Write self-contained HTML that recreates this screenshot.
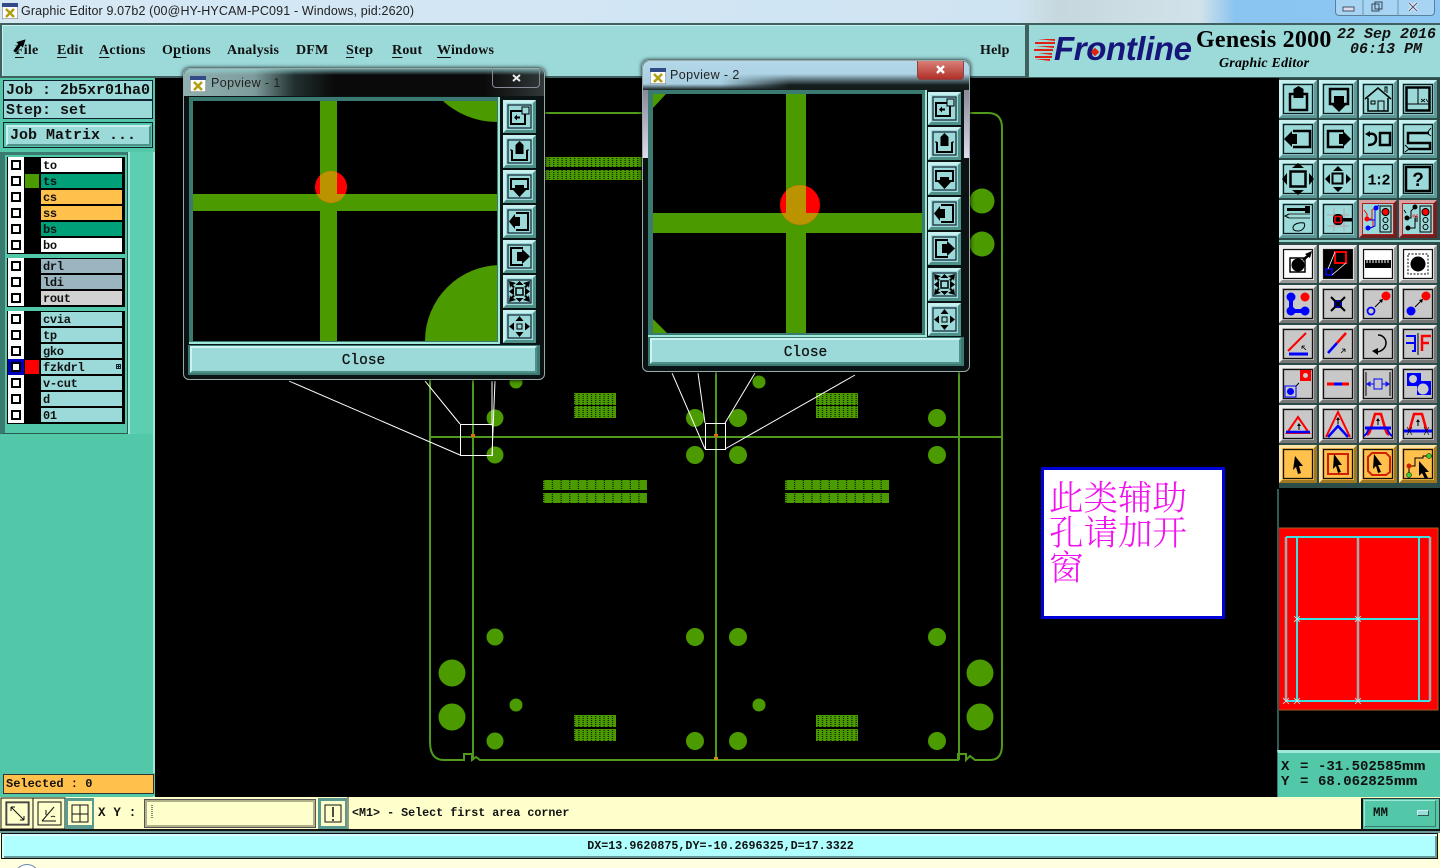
<!DOCTYPE html>
<html><head><meta charset="utf-8"><title>Graphic Editor</title>
<style>
html,body{margin:0;padding:0;width:1440px;height:868px;overflow:hidden;background:#000}
div,span,svg{position:absolute;box-sizing:border-box}
#root{left:0;top:0;width:1440px;height:868px;overflow:hidden}
.m{font-family:"Liberation Mono",monospace;font-weight:bold;color:#111;white-space:pre}
.menu{font:bold 14px/18px "Liberation Serif",serif;color:#111;top:40px;white-space:pre;letter-spacing:.2px}
.menu u{text-underline-offset:3px;text-decoration-thickness:1px}
.info{left:3px;width:150px;height:20px;background:#9cd9d9;border:1px solid #123;font-size:15px;line-height:20px;padding-left:2px}
.grp{left:7px;width:118px;background:#000}
.ck{left:8px;width:16px;height:16px;background:#fff}
.ck:after{content:"";position:absolute;box-sizing:border-box;left:3px;top:3px;width:10px;height:10px;background:#fff;border:2px solid #000}
.ln{left:41px;width:81px;height:14px;font-size:12px;line-height:16px;padding-left:2px;letter-spacing:-.3px}
.a{background:#9cd9d9}
.pop{border:1px solid #9aa;border-radius:6px;background:#1b2a2a;box-shadow:0 0 4px #000}
.close{background:#9cd9d9;border:2px solid;border-color:#cdf2f2 #4f9088 #4f9088 #cdf2f2;font-size:14.500px;font-weight:normal;text-align:center;color:#111;-webkit-text-stroke:.3px #111}
</style></head><body><div id="root">
<svg width="0" height="0" style="left:0;top:0"><defs>
<g id="ft"><rect width="38" height="38" fill="#9cd9d9"/><path d="M0 0H38L35 3H3V35L0 38Z" fill="#c8f0f0"/><path d="M38 38H0L3 35H35V3L38 0Z" fill="#5f9a9a"/><rect x="4.500" y="4.500" width="29" height="29" fill="none" stroke="#0c1c1c" stroke-width="1.300"/></g>
<g id="fr"><rect width="38" height="38" fill="#b02020"/><path d="M0 0H38L35 3H3V35L0 38Z" fill="#d8a0a0"/><path d="M38 38H0L3 35H35V3L38 0Z" fill="#702020"/><rect x="4" y="4" width="30" height="30" fill="#9cd9d9"/></g>
<g id="fg"><rect width="38" height="38" fill="#c8c8c8"/><path d="M0 0H38L35 3H3V35L0 38Z" fill="#eee"/><path d="M38 38H0L3 35H35V3L38 0Z" fill="#777"/><rect x="4.500" y="4.500" width="29" height="29" fill="none" stroke="#111" stroke-width="1.300"/></g>
<g id="fw"><rect width="38" height="38" fill="#fff"/><path d="M0 0H38L35 3H3V35L0 38Z" fill="#eee"/><path d="M38 38H0L3 35H35V3L38 0Z" fill="#999"/><rect x="4.500" y="4.500" width="29" height="29" fill="none" stroke="#111" stroke-width="1.300"/></g>
<g id="fo"><rect width="38" height="38" fill="#ffc04c"/><path d="M0 0H38L35 3H3V35L0 38Z" fill="#ffe4a8"/><path d="M38 38H0L3 35H35V3L38 0Z" fill="#a07820"/><rect x="4.500" y="4.500" width="29" height="29" fill="none" stroke="#111" stroke-width="1.300"/></g>
<g id="pb"><rect width="33" height="33" fill="#9cd9d9"/><path d="M0 0H33L30 3H3V30L0 33Z" fill="#c8f0f0"/><path d="M33 33H0L3 30H30V3L33 0Z" fill="#4f9088"/><rect x="5" y="5" width="23" height="23" fill="none" stroke="#123" stroke-width="1.200"/></g>
<pattern id="pd" width="4.200" height="2" patternUnits="userSpaceOnUse"><rect width="4.200" height="2" fill="#4a9a00"/><rect x="3" width="1" height="1" fill="#000"/></pattern>
<pattern id="pw" width="8.650" height="2" patternUnits="userSpaceOnUse"><rect width="8.650" height="2" fill="#4a9a00"/><rect x="7" width="1" height="1" fill="#000"/></pattern>
<g id="i1"><rect x="8" y="11" width="14" height="13" fill="none" stroke="#000" stroke-width="2"/><rect x="19" y="7" width="7" height="7" fill="#9cd9d9" stroke="#000"/><path d="M11 17.500l3-3v2h3v2h-3v2z" fill="#000"/></g>
<g id="i2"><path d="M9 15v10h15V15" fill="none" stroke="#000" stroke-width="2"/><path d="M7 15h2M24 15h2" stroke="#000"/><path d="M16.500 6l4 4v9h-8v-9z" fill="#000"/></g>
<g id="i3"><path d="M8 9h17v10H8z" fill="none" stroke="#000" stroke-width="2"/><path d="M12 15h9v5h2l-6.500 7L10 20h2z" fill="#000"/></g>
<g id="i4"><path d="M13 8h12v17H13" fill="none" stroke="#000" stroke-width="2"/><path d="M17 12v9h-5v3l-6-7.500L12 9v3z" fill="#000"/></g>
<g id="i5"><path d="M20 8H8v17h12" fill="none" stroke="#000" stroke-width="2"/><path d="M14 12v9h5v3l8-7.500L19 9v3z" fill="#000"/></g>
<g id="i6"><rect x="13" y="13" width="7" height="7" fill="none" stroke="#000" stroke-width="1.500"/><path d="M6 6l7 2-3 2 2 2-2 1-2-2-1 2zM27 6l-7 2 3 2-2 2 2 1 2-2 1 2zM6 27l7-2-3-2 2-2-2-1-2 2-1-2zM27 27l-7-2 3-2-2-2 2-1 2 2 1-2z" fill="#000"/><path d="M6 16.500l5-4v8zM27 16.500l-5-4v8zM16.500 6l4 4h-8zM16.500 27l4-4h-8z" fill="#000"/></g>
<g id="i7"><rect x="14" y="14" width="5" height="5" fill="none" stroke="#000"/><path d="M16.500 6l4 5h-8zM16.500 27l4-5h-8zM6 16.500l5-4v8zM27 16.500l-5-4v8z" fill="#000"/></g>
</defs></svg>

<!-- title bar -->
<div style="left:0;top:0;width:1440px;height:23px;background:linear-gradient(to right,#d6e8f4 0,#d2e6f4 500px,#cfe4f2 1015px,#c6d8dc 1060px,#d2e2ea 1200px,#8ac4f0 1235px,#8cc6f2 1440px)"></div>
<svg style="left:2px;top:3px" width="16" height="16"><rect width="16" height="16" fill="#fff" stroke="#666"/><rect width="16" height="4" fill="#334a88"/><path d="M4 6l8 8M12 6l-8 8" stroke="#b0a010" stroke-width="2.500"/></svg>
<div style="left:21px;top:3px;font:12.500px/16px 'Liberation Sans',sans-serif;color:#222;white-space:pre;letter-spacing:.14px">Graphic Editor 9.07b2 (00@HY-HYCAM-PC091 - Windows, pid:2620)</div>
<div style="left:1335px;top:-1px;width:100px;height:17px;background:#a8d4f4;border:1px solid #5a7f98;border-radius:0 0 4px 4px"></div>
<svg style="left:1335px;top:0" width="100" height="16"><path d="M28 0v16M63 0v16" stroke="#6a93ad"/><rect x="8" y="7" width="11" height="4" fill="#dde" stroke="#456"/><rect x="37" y="4" width="7" height="7" fill="none" stroke="#345"/><rect x="40" y="2" width="7" height="7" fill="none" stroke="#345"/><path d="M74 3l8 8M82 3l-8 8" stroke="#eef" stroke-width="3"/><path d="M74 3l8 8M82 3l-8 8" stroke="#456" stroke-width="1"/></svg>

<!-- menu -->
<div style="left:0;top:23px;width:1440px;height:55px;background:#405f5f"></div>
<div style="left:2px;top:25px;width:1023px;height:51px;background:#9cd9d9;border-top:1px solid #c8f0f0;border-left:1px solid #c8f0f0"></div>
<div style="left:1029px;top:25px;width:411px;height:52px;background:#9cd9d9"></div>
<div class="menu" style="left:15px;top:42px"><u>F</u>ile</div>
<div class="menu" style="left:57px;top:42px"><u>E</u>dit</div>
<div class="menu" style="left:99px;top:42px"><u>A</u>ctions</div>
<div class="menu" style="left:162px;top:42px">O<u>p</u>tions</div>
<div class="menu" style="left:227px;top:42px">Analysis</div>
<div class="menu" style="left:296px;top:42px">DFM</div>
<div class="menu" style="left:346px;top:42px"><u>S</u>tep</div>
<div class="menu" style="left:392px;top:42px"><u>R</u>out</div>
<div class="menu" style="left:437px;top:42px"><u>W</u>indows</div>
<div class="menu" style="left:980px;top:42px">Help</div>
<svg style="left:10px;top:36px" width="20" height="20"><path d="M16 3L6 6l2 2-5 7 3 2 5-7 2 2z" fill="#000" stroke="#9cd9d9" stroke-width=".5"/></svg>

<!-- logo -->
<svg style="left:1034px;top:36px" width="24" height="28"><path d="M4 3H21V5zM2 10H20V12zM4 17H18V19zM1 23H16V25zM1 6H21V8L1 8zM0 13H19V15H0zM1 20H18V22H1z" fill="#e02010"/></svg>
<div style="left:1054px;top:29px;font:italic bold 33px/40px 'Liberation Sans',sans-serif;color:#16167a;white-space:pre;letter-spacing:-.4px">Frontline</div>
<div style="left:1092px;top:49px;width:6px;height:6px;background:#e02010;transform:rotate(45deg)"></div>
<div style="left:1196px;top:25px;font:bold 24px/30px 'Liberation Serif',serif;color:#000;white-space:pre;letter-spacing:.25px">Genesis 2000</div>
<div style="left:1219px;top:56px;font:italic bold 14px/16px 'Liberation Serif',serif;color:#000;white-space:pre;letter-spacing:.2px">Graphic Editor</div>
<div class="m" style="left:1337px;top:27px;font-size:15px;line-height:16px;font-style:italic">22 Sep 2016</div>
<div class="m" style="left:1350px;top:42px;font-size:15px;line-height:16px;font-style:italic">06:13 PM</div>

<!-- left panel -->
<div style="left:0;top:78px;width:155px;height:719px;background:#52c8a8"></div>
<div class="info m" style="top:80px">Job : 2b5xr01ha0</div>
<div class="info m" style="top:100px;height:19px;line-height:19px">Step: set</div>
<div style="left:3px;top:122px;width:150px;height:26px;background:#52c8a8;border:1px solid #123"></div>
<div class="m" style="left:6px;top:125px;width:145px;height:21px;background:#9cd9d9;border:2px solid;border-color:#c8f0f0 #4f9088 #4f9088 #c8f0f0;font-size:15px;line-height:17px;padding-left:2px">Job Matrix ...</div>
<div style="left:0;top:152px;width:128px;height:282px;background:#52c8a8;border:1px solid #2a5a50;border-left:5px solid #3a7a70;border-top:3px solid #3a7a70"></div>
<div style="left:128px;top:152px;width:25px;height:282px;background:#5ccfb1;border-left:2px solid #a0e8d8"></div>
<div style="left:153px;top:152px;width:2px;height:645px;background:#a0e8d8"></div>
<div class="grp" style="top:157px;height:97px"></div>
<div class="grp" style="top:258px;height:49px"></div>
<div class="grp" style="top:311px;height:113px"></div>
<div class="ck" style="top:157px"></div><div class="ln m" style="top:158px;background:#fff">to</div>
<div class="ck" style="top:173px"></div><div style="left:25px;top:174px;width:14px;height:14px;background:#4a9a00"></div><div class="ln m" style="top:174px;background:#00a078">ts</div>
<div class="ck" style="top:189px"></div><div class="ln m" style="top:190px;background:#ffc04c">cs</div>
<div class="ck" style="top:205px"></div><div class="ln m" style="top:206px;background:#ffc04c">ss</div>
<div class="ck" style="top:221px"></div><div class="ln m" style="top:222px;background:#00a078">bs</div>
<div class="ck" style="top:237px"></div><div class="ln m" style="top:238px;background:#fff">bo</div>
<div class="ck" style="top:258px"></div><div class="ln m" style="top:259px;background:#9ab4c0">drl</div>
<div class="ck" style="top:274px"></div><div class="ln m" style="top:275px;background:#9ab4c0">ldi</div>
<div class="ck" style="top:290px"></div><div class="ln m" style="top:291px;background:#d2d2d2">rout</div>
<div class="ck" style="top:311px"></div><div class="ln m a" style="top:312px">cvia</div>
<div class="ck" style="top:327px"></div><div class="ln m a" style="top:328px">tp</div>
<div class="ck" style="top:343px"></div><div class="ln m a" style="top:344px">gko</div>
<div style="left:8px;top:359px;width:16px;height:16px;background:#0000c0"></div><div style="left:11px;top:362px;width:10px;height:10px;background:#fff;border:2px solid #000"></div><div style="left:25px;top:360px;width:14px;height:14px;background:#f00"></div><div class="ln m a" style="top:360px">fzkdrl</div>
<svg style="left:116px;top:364px" width="6" height="6"><path d="M.5.500h4v4h-4zM2.500.5v4M.5 2.500h4" fill="none" stroke="#123"/></svg>
<div class="ck" style="top:375px"></div><div class="ln m a" style="top:376px">v-cut</div>
<div class="ck" style="top:391px"></div><div class="ln m a" style="top:392px">d</div>
<div class="ck" style="top:407px"></div><div class="ln m a" style="top:408px">01</div>
<div style="left:0;top:773px;width:155px;height:23px;background:#52c8a8"></div>
<div class="m" style="left:3px;top:774px;width:151px;height:20px;background:#ffc04c;border:1px solid #333;font-size:12px;line-height:18px;padding-left:2px">Selected : 0</div>

<!-- canvas -->
<svg style="left:155px;top:78px" width="1122" height="719" viewBox="155 78 1122 719">
<rect x="155" y="78" width="1122" height="719" fill="#000"/>
<g fill="none" stroke="#4f9a1c" stroke-width="2">
<path d="M540 113H988Q1002 113 1002 128V745Q1002 760 990 760H975L970 756L966 760V754H958V760H912H720H480L476 757L472 760V754H464V760H444Q430 760 430 742V370"/>
<path d="M473 370V760M716 370V760M959 370V760M430 437H1002"/>
</g>
<g fill="#4a9a00">
<circle cx="495" cy="418" r="8.500"/><circle cx="495" cy="455" r="8.500"/><circle cx="695" cy="418" r="9"/><circle cx="695" cy="455" r="9"/><circle cx="738" cy="418" r="9"/><circle cx="738" cy="455" r="9"/><circle cx="937" cy="418" r="9"/><circle cx="937" cy="455" r="9"/>
<circle cx="495" cy="637" r="8.500"/><circle cx="695" cy="637" r="9"/><circle cx="738" cy="637" r="9"/><circle cx="937" cy="637" r="9"/>
<circle cx="495" cy="741" r="8.500"/><circle cx="695" cy="741" r="9"/><circle cx="738" cy="741" r="9"/><circle cx="937" cy="741" r="9"/>
<circle cx="516" cy="382" r="6.500"/><circle cx="759" cy="382" r="6.500"/><circle cx="516" cy="705" r="6.500"/><circle cx="759" cy="705" r="6.500"/>
<circle cx="452" cy="673" r="13.500"/><circle cx="452" cy="717" r="13.500"/><circle cx="980" cy="673" r="13.500"/><circle cx="980" cy="717" r="13.500"/><circle cx="982" cy="201" r="12.500"/><circle cx="982" cy="244" r="12.500"/>
</g>
<g fill="url(#pd)">
<rect x="574" y="393" width="42" height="12"/><rect x="574" y="406" width="42" height="12"/><rect x="816" y="393" width="42" height="12"/><rect x="816" y="406" width="42" height="12"/>
<rect x="574" y="715" width="42" height="12"/><rect x="574" y="729" width="42" height="12"/><rect x="816" y="715" width="42" height="12"/><rect x="816" y="729" width="42" height="12"/>
<rect x="545" y="157" width="97" height="10"/><rect x="545" y="170" width="97" height="10"/>
</g>
<g fill="url(#pw)">
<rect x="543" y="480" width="104" height="10"/><rect x="543" y="493" width="104" height="10"/><rect x="785" y="480" width="104" height="10"/><rect x="785" y="493" width="104" height="10"/>
</g>
<g fill="none" stroke="#fff" stroke-width="1">
<rect x="460.500" y="424.500" width="32" height="31"/><rect x="705.500" y="423.500" width="20" height="26"/>
<path d="M289 381L460 455M425 381L460 424M492 381V424M495 381L492 455M672 373L705 449M698 373L705 423M755 373L725 423M855 375L725 449"/>
</g>
<rect x="471" y="434" width="4" height="3" fill="#e06a10"/><rect x="714" y="434" width="4" height="3" fill="#e06a10"/><rect x="714" y="757" width="4" height="3" fill="#d08a10"/>
</svg>

<!-- note -->
<div style="left:1041px;top:467px;width:184px;height:152px;background:#fff;border:3px solid #0000d8"></div>
<div style="left:1049px;top:478px;width:140px;font:34.500px/35px 'Noto Serif CJK SC','Liberation Serif',serif;color:#f010f0;font-weight:300">此类辅助<br>孔请加开<br>窗</div>

<!-- popup 1 -->
<div class="pop" style="left:183px;top:68px;width:362px;height:312px;background:#0c1212"></div>
<div style="left:184px;top:69px;width:360px;height:27px;border-radius:6px 6px 0 0;background:linear-gradient(to right,#8fb0b0 0,#7f9c9c 70px,#223030 110px,#0a0a0a 150px,#0a0a0a 300px,#303838 360px)"></div>
<div style="left:184px;top:69px;width:360px;height:6px;border-radius:6px 6px 0 0;background:linear-gradient(to bottom,rgba(150,215,215,.7),rgba(150,215,215,0))"></div>
<svg style="left:190px;top:76px" width="16" height="16"><rect width="16" height="16" fill="#fff" stroke="#666"/><rect width="16" height="4" fill="#334a88"/><path d="M4 6l8 8M12 6l-8 8" stroke="#b0a010" stroke-width="2.500"/></svg>
<div style="left:211px;top:75px;font:12.500px/16px 'Liberation Sans',sans-serif;color:#222;white-space:pre;letter-spacing:.4px">Popview - 1</div>
<div style="left:492px;top:68px;width:48px;height:20px;border:1px solid #889;border-top:0;border-radius:0 0 4px 4px"></div>
<svg style="left:510px;top:73px" width="14" height="10"><path d="M3 2l7 6M10 2l-7 6" stroke="#eee" stroke-width="2"/></svg>
<div style="left:188px;top:96px;width:352px;height:280px;background:#0a1414"></div>
<div style="left:189px;top:97px;width:311px;height:247px;background:#3a7a70;border-right:2px solid #a0e8d8;border-bottom:2px solid #a0e8d8"></div>
<svg style="left:193px;top:101px" width="304" height="240" viewBox="193 101 304 240">
<rect x="193" y="101" width="304" height="240" fill="#000"/>
<circle cx="497" cy="42" r="80" fill="#4a9a00"/><circle cx="501" cy="341" r="76" fill="#4a9a00"/>
<path d="M320 101h17v240h-17zM193 194h304v17H193z" fill="#4a9a00"/>
<circle cx="331" cy="187" r="16" fill="#f00"/>
<clipPath id="c1"><circle cx="331" cy="187" r="16"/></clipPath>
<path clip-path="url(#c1)" d="M320 101h17v240h-17zM193 194h304v17H193z" fill="#bb9200"/>
</svg>
<svg style="left:503px;top:100px" width="34" height="243">
<g><use href="#pb" y="0"/><use href="#i1" y="0"/><use href="#pb" y="35"/><use href="#i2" y="35"/><use href="#pb" y="70"/><use href="#i3" y="70"/><use href="#pb" y="105"/><use href="#i4" y="105"/><use href="#pb" y="140"/><use href="#i5" y="140"/><use href="#pb" y="175"/><use href="#i6" y="175"/><use href="#pb" y="210"/><use href="#i7" y="210"/></g>
</svg>
<div style="left:188px;top:345px;width:352px;height:30px;background:#3a7a70"></div>
<div class="m close" style="left:190px;top:346px;width:347px;height:27px;line-height:26px">Close</div>

<!-- popup 2 -->
<div class="pop" style="left:642px;top:60px;width:328px;height:312px;background:#0c1212"></div>
<div style="left:643px;top:61px;width:326px;height:29px;border-radius:6px 6px 0 0;background:linear-gradient(to bottom,#b4d8e8 0,#a4cde0 100%)"></div>
<div style="left:643px;top:84px;width:326px;height:6px;background:linear-gradient(to bottom,rgba(16,24,24,0),#141c1c)"></div>
<div style="left:720px;top:74px;width:249px;height:16px;background:linear-gradient(to bottom,rgba(16,24,24,0),#141c1c 70%);-webkit-mask-image:linear-gradient(to right,transparent,#000 70px);mask-image:linear-gradient(to right,transparent,#000 70px)"></div>
<svg style="left:650px;top:68px" width="16" height="16"><rect width="16" height="16" fill="#fff" stroke="#666"/><rect width="16" height="4" fill="#334a88"/><path d="M4 6l8 8M12 6l-8 8" stroke="#b0a010" stroke-width="2.500"/></svg>
<div style="left:670px;top:67px;font:12.500px/16px 'Liberation Sans',sans-serif;color:#222;white-space:pre;letter-spacing:.4px">Popview - 2</div>
<div style="left:917px;top:61px;width:47px;height:19px;border:1px solid #844;border-top:0;border-radius:0 0 4px 4px;background:linear-gradient(to bottom,#d88078,#b03028)"></div>
<svg style="left:934px;top:64px" width="14" height="12"><path d="M3 2l7 7M10 2l-7 7" stroke="#fff" stroke-width="2.400"/></svg>
<div style="left:643px;top:90px;width:5px;height:68px;background:linear-gradient(to bottom,#889,#dde)"></div>
<div style="left:964px;top:90px;width:5px;height:68px;background:linear-gradient(to bottom,#889,#dde)"></div>
<div style="left:648px;top:90px;width:316px;height:281px;background:#0a1414"></div>
<div style="left:648px;top:90px;width:279px;height:247px;background:#3a7a70;border-right:2px solid #a0e8d8;border-bottom:2px solid #a0e8d8"></div>
<svg style="left:653px;top:94px" width="269" height="239" viewBox="653 94 269 239">
<rect x="653" y="94" width="269" height="239" fill="#000"/>
<path d="M653 94h13l-13 14zM653 319l14 14h-14z" fill="#4a9a00"/>
<path d="M786 94h20v239h-20zM653 213h269v20H653z" fill="#4a9a00"/>
<circle cx="800" cy="205" r="20" fill="#f00"/>
<clipPath id="c2"><circle cx="800" cy="205" r="20"/></clipPath>
<path clip-path="url(#c2)" d="M786 94h20v239h-20zM653 213h269v20H653z" fill="#bb9200"/>
</svg>
<svg style="left:928px;top:92px" width="34" height="245">
<use href="#pb" y="0"/><use href="#i1" y="0"/><use href="#pb" y="35"/><use href="#i2" y="35"/><use href="#pb" y="70"/><use href="#i3" y="70"/><use href="#pb" y="105"/><use href="#i4" y="105"/><use href="#pb" y="140"/><use href="#i5" y="140"/><use href="#pb" y="176"/><use href="#i6" y="176"/><use href="#pb" y="211"/><use href="#i7" y="211"/>
</svg>
<div style="left:648px;top:337px;width:316px;height:29px;background:#3a7a70"></div>
<div class="m close" style="left:650px;top:338px;width:311px;height:26px;line-height:26px">Close</div>

<!-- right toolbar -->
<div style="left:1277px;top:78px;width:163px;height:410px;background:#2c4c4a"></div>
<div style="left:1277px;top:78px;width:2px;height:410px;background:#000"></div>
<div style="left:1279px;top:240px;width:161px;height:2px;background:#8fd0c8"></div>
<svg style="left:1279px;top:80px" width="161" height="405" viewBox="0 0 161 405" font-family="Liberation Sans,sans-serif">
<!-- row 1 -->
<use href="#ft"/><path d="M11 14h17v16H11z" fill="none" stroke="#000" stroke-width="2.500"/><path d="M19.500 6l5 3v9h-10V9z" fill="#000"/>
<g transform="translate(40 0)"><use href="#ft"/><path d="M11 9h18v15H11z" fill="none" stroke="#000" stroke-width="2.500"/><path d="M15 16h10v8h3l-8 8-8-8h3z" fill="#000"/></g>
<g transform="translate(80 0)"><use href="#ft"/><path d="M6 19L19 8l13 11" fill="none" stroke="#000" stroke-width="1.500"/><path d="M9 18v13h20V18" fill="none" stroke="#000" stroke-width="1.500"/><rect x="12" y="21" width="4" height="3" fill="none" stroke="#000"/><path d="M19 31v-10h6v10" fill="none" stroke="#000"/><path d="M26 12V7h2v6" fill="none" stroke="#000"/></g>
<g transform="translate(120 0)"><use href="#ft"/><rect x="7.500" y="7.500" width="23" height="23" fill="none" stroke="#000" stroke-width="2.500"/><path d="M19 8v16M8 24h22" stroke="#000"/><path d="M22 19l4 3M26 19l-4 3M27 19l2 3" stroke="#000" stroke-width=".8"/></g>
<!-- row 2 -->
<g transform="translate(0 40)"><use href="#ft"/><path d="M14 11h17v16H14" fill="none" stroke="#000" stroke-width="2.500"/><path d="M18 14v10h-5v3l-8-8 8-8v3z" fill="#000"/></g>
<g transform="translate(40 40)"><use href="#ft"/><path d="M25 11H9v16h16" fill="none" stroke="#000" stroke-width="2.500"/><path d="M20 14v10h4v3l8-8-8-8v3z" fill="#000"/></g>
<g transform="translate(80 40)"><use href="#ft"/><rect x="21" y="13" width="10" height="12" fill="none" stroke="#000" stroke-width="2.500"/><path d="M10 14c5-1 7 1 7 5s-3 6-8 6" fill="none" stroke="#000" stroke-width="2.500"/><path d="M6 14l5-3v6z" fill="#000"/></g>
<g transform="translate(120 40)"><use href="#ft"/><path d="M30 13H9v10h22v6H10" fill="none" stroke="#000" stroke-width="2.500"/><path d="M32 8l-4 5 4 3M6 25l4 4-4 3" fill="none" stroke="#000"/></g>
<!-- row 3 -->
<g transform="translate(0 80)"><use href="#ft"/><rect x="11.500" y="11.500" width="15" height="15" fill="none" stroke="#000" stroke-width="2.500"/><path d="M19 3l6 5H13zM19 35l6-5H13zM3 19l5-6v12zM35 19l-5-6v12z" fill="#000"/></g>
<g transform="translate(40 80)"><use href="#ft"/><rect x="13.500" y="13.500" width="10" height="10" fill="none" stroke="#000" stroke-width="2"/><path d="M19 6l5 5H14zM19 32l5-5H14zM6 19l5-5v10zM32 19l-5-5v10z" fill="#000"/></g>
<g transform="translate(80 80)"><use href="#ft"/><text x="19" y="24.500" text-anchor="middle" font-size="15" font-weight="bold" fill="#000" font-family="Liberation Mono,monospace" letter-spacing="-2">1:2</text></g>
<g transform="translate(120 80)"><use href="#ft"/><rect x="7" y="7" width="24" height="24" fill="none" stroke="#000" stroke-width="2.500"/><text x="19" y="26" text-anchor="middle" font-size="19" font-weight="bold" fill="#000">?</text></g>
<!-- row 4 -->
<g transform="translate(0 120)"><use href="#ft"/><path d="M8 8h20v3H8z" fill="#000"/><path d="M26 6h5v7h-5z" fill="#000"/><path d="M10 18h21M10 14h21" stroke="#000" stroke-width=".8"/><path d="M10 14l-4 2 4 2" fill="none" stroke="#000"/><path d="M14 28c0-4 6-6 11-5 2 3-1 8-6 8-3 0-5-1-5-3z" fill="none" stroke="#000"/></g>
<g transform="translate(40 120)"><use href="#ft"/><path d="M8 15h22M8 26h22M15 8v23M25 8v23" stroke="#b8a8a8"/><rect x="14" y="14" width="10" height="11" rx="4" fill="#000"/><rect x="16" y="16.500" width="6" height="6" fill="none" stroke="#f00" stroke-width="1.500"/><rect x="23" y="18" width="10" height="3.500" fill="#000"/></g>
<g transform="translate(80 120)"><use href="#fr"/><path d="M5 10l3 4v4M8 19H13v-9l6-4M11 20h3v7l-5 2" fill="none" stroke="#f00"/><path d="M8 20h8M16 20v6l-5 2M16 20V9l4-4" fill="none" stroke="#00f"/><circle cx="8" cy="19" r="2.500" fill="#f00"/><circle cx="17" cy="8" r="2.500" fill="#00f"/><circle cx="9" cy="28" r="2.500" fill="#00f"/><rect x="21" y="6" width="11" height="26" fill="#9cd9d9" stroke="#000"/><circle cx="26.500" cy="12" r="3.500" fill="#f00" stroke="#000"/><circle cx="26.500" cy="20" r="2.500" fill="none" stroke="#000"/><circle cx="26.500" cy="27" r="2.500" fill="none" stroke="#000"/></g>
<g transform="translate(120 120)"><use href="#fr"/><path d="M7 18h5v-7l4-4M8 28h8V18M5 10l2 3M16 17h3M16 19h3M16 21h3" fill="none" stroke="#000"/><circle cx="8" cy="18" r="2.500" fill="#000"/><circle cx="16" cy="7" r="2.500" fill="#000"/><circle cx="9" cy="28" r="2.500" fill="#000"/><path d="M13 16h5M15 14v4M18 14v4" stroke="#e05050"/><rect x="21" y="6" width="11" height="26" fill="#9cd9d9" stroke="#000"/><circle cx="26.500" cy="12" r="3.500" fill="#f00" stroke="#000"/><circle cx="26.500" cy="20" r="2.500" fill="none" stroke="#000"/><circle cx="26.500" cy="27" r="2.500" fill="none" stroke="#000"/></g>
<!-- group 2 row 1 -->
<g transform="translate(0 165)"><use href="#fw"/><rect x="11" y="13" width="15" height="14" fill="none" stroke="#000" stroke-width="1.500"/><circle cx="19" cy="20" r="6.500" fill="#000"/><path d="M24 15l7-6" stroke="#000" stroke-width="2.500"/><path d="M33 6l-2 7-5-4z" fill="#000"/></g>
<g transform="translate(40 165)"><use href="#fw"/><rect x="5" y="5" width="28" height="28" fill="#000"/><rect x="16" y="7" width="11" height="11" fill="none" stroke="#f00" stroke-width="2"/><rect x="7" y="24" width="6" height="6" fill="none" stroke="#00f" stroke-width="1.500"/><path d="M16 7L9 24M27 18L13 30" stroke="#fff" stroke-width=".8"/></g>
<g transform="translate(80 165)"><use href="#fw"/><rect x="6" y="15" width="26" height="8" fill="#000"/><path d="M8 14v4M11 14v4M14 14v4M17 14v4M20 14v4M23 14v4M26 14v4M29 14v4" stroke="#fff"/></g>
<g transform="translate(120 165)"><use href="#fw"/><rect x="9" y="9" width="20" height="20" fill="none" stroke="#000" stroke-dasharray="2 1.500"/><circle cx="19" cy="19" r="7.500" fill="#000"/></g>
<!-- row 2 -->
<g transform="translate(0 205)"><use href="#fg"/><path d="M12 13v13h13" fill="none" stroke="#00f" stroke-width="4"/><circle cx="12" cy="12" r="4.500" fill="#00f"/><circle cx="12" cy="26" r="4.500" fill="#00f"/><circle cx="26" cy="26" r="4.500" fill="#00f"/><circle cx="26" cy="12" r="4.500" fill="#f00"/></g>
<g transform="translate(40 205)"><use href="#fg"/><rect x="15" y="15" width="8" height="8" fill="#00c"/><path d="M12 12l14 14M26 12L12 26" stroke="#000" stroke-width="2"/></g>
<g transform="translate(80 205)"><use href="#fg"/><circle cx="12" cy="26" r="3.500" fill="none" stroke="#00f" stroke-width="1.800"/><circle cx="27" cy="11" r="4.500" fill="#f00"/><path d="M16 22l6-6" stroke="#000"/><path d="M24 14l-1 4-3-3z" fill="#000"/></g>
<g transform="translate(120 205)"><use href="#fg"/><circle cx="12" cy="26" r="4.500" fill="#00f"/><circle cx="27" cy="11" r="4.500" fill="#f00"/><path d="M16 22l6-6" stroke="#000"/><path d="M24 14l-1 4-3-3z" fill="#000"/></g>
<!-- row 3 -->
<g transform="translate(0 245)"><use href="#fg"/><path d="M9 26L27 8" stroke="#f00" stroke-width="2"/><path d="M10 29h19" stroke="#00f" stroke-width="3"/><path d="M23 21l4 4M23 21v3M23 21h3" stroke="#000" stroke-width=".8" fill="none"/></g>
<g transform="translate(40 245)"><use href="#fg"/><path d="M9 28l9-10" stroke="#00f" stroke-width="2.500"/><path d="M18 18l9-10" stroke="#f00" stroke-width="2.500"/><path d="M22 28l4-4M26 24h-3M26 24v3" stroke="#000" stroke-width=".8" fill="none"/></g>
<g transform="translate(80 245)"><use href="#fg"/><path d="M19 10c5 0 8 4 8 8s-3 8-9 9" fill="none" stroke="#000" stroke-width="1.500"/><path d="M13 26l6-3v7z" fill="#000"/></g>
<g transform="translate(120 245)"><use href="#fg"/><path d="M19 8v22" stroke="#000"/><path d="M7 11h9v15h-3M7 18h8" fill="none" stroke="#00f" stroke-width="2"/><path d="M23 26V11h9M23 18h7" fill="none" stroke="#f00" stroke-width="2.500"/></g>
<!-- row 4 -->
<g transform="translate(0 285)"><use href="#fg"/><rect x="21" y="5" width="11" height="11" fill="#f00"/><circle cx="26.500" cy="10.500" r="2.500" fill="#ccc"/><rect x="6" y="21" width="11" height="11" fill="none" stroke="#00f"/><circle cx="11.500" cy="26.500" r="3.500" fill="#00f"/><path d="M17 21l3-3" stroke="#000"/></g>
<g transform="translate(40 285)"><use href="#fg"/><path d="M8 19h22" stroke="#f00" stroke-width="3"/><path d="M15 19h8" stroke="#00f" stroke-width="3"/></g>
<g transform="translate(80 285)"><use href="#fg"/><path d="M7 7v24M31 7v24" stroke="#000"/><path d="M8 19h22M8 19l3-2v4zM30 19l-3-2v4z" stroke="#00f" fill="none"/><rect x="15" y="14" width="8" height="10" fill="#c8c8c8" stroke="#00f"/></g>
<g transform="translate(120 285)"><use href="#fg"/><path d="M8 8h14v8h10v14H18V21H8z" fill="#00f"/><circle cx="14" cy="14" r="4" fill="#ccc"/><circle cx="24" cy="24" r="5.500" fill="#ccc"/></g>
<!-- row 5 -->
<g transform="translate(0 325)"><use href="#fg"/><path d="M8 28L19 12l11 16z" fill="none" stroke="#f00" stroke-width="2"/><path d="M7 27h24" stroke="#00f" stroke-width="2.500"/><path d="M20 25v-6" stroke="#000"/><path d="M20 18l-2 3h4z" fill="#000"/></g>
<g transform="translate(40 325)"><use href="#fg"/><path d="M7 32L19 7l12 25" fill="none" stroke="#f00" stroke-width="2"/><path d="M9 32l10-11 10 11" fill="none" stroke="#00f" stroke-width="2.500"/><path d="M19 19v-5" stroke="#000"/><path d="M19 12l-2 3h4z" fill="#000"/></g>
<g transform="translate(80 325)"><use href="#fg"/><path d="M8 30c3-2 3-4 4-7l4-14h6l4 14c1 3 1 5 4 7" fill="none" stroke="#f00" stroke-width="2.500"/><path d="M6 23h26" stroke="#00f" stroke-width="3"/><path d="M5 31c3-2 4-5 5-8M33 31c-3-2-4-5-5-8" fill="none" stroke="#00f" stroke-width="2"/><path d="M19 20v-5" stroke="#000"/><path d="M19 13l-2 3h4z" fill="#000"/></g>
<g transform="translate(120 325)"><use href="#fg"/><path d="M10 27l5-18h8l5 18" fill="none" stroke="#f00" stroke-width="2.500"/><path d="M5 26h28" stroke="#00f" stroke-width="3"/><path d="M8 22l5 8M13 22l-5 8M25 22l5 8M30 22l-5 8" stroke="#000" stroke-width=".7"/><path d="M19 21v-5" stroke="#000"/><path d="M19 14l-2 3h4z" fill="#000"/></g>
<!-- row 6 -->
<g transform="translate(0 365)"><use href="#fo"/><path d="M16 11l8 10-4 0 2 7-3 1-2-7-3 3z" fill="#000"/></g>
<g transform="translate(40 365)"><use href="#fo"/><rect x="9" y="9" width="20" height="20" fill="none" stroke="#d02000" stroke-width="2"/><path d="M15 9l8 11-4 0 3 7-3 1-2-7-3 3z" fill="#000"/></g>
<g transform="translate(80 365)"><use href="#fo"/><path d="M13 8h14l4 4v15l-4 3H13l-4-4V12z" fill="none" stroke="#d02000" stroke-width="2"/><path d="M15 9l8 11-4 0 3 7-3 1-2-7-3 3z" fill="#000"/></g>
<g transform="translate(120 365)"><use href="#fo"/><path d="M10 30v-9h6v-8h8v-2h6" fill="none" stroke="#000"/><circle cx="10" cy="21" r="2.500" fill="#d02000"/><circle cx="30" cy="11" r="2.500" fill="#30d030" stroke="#000" stroke-width=".5"/><circle cx="10" cy="30" r="2.500" fill="#30d030" stroke="#000" stroke-width=".5"/><path d="M20 16l10 11-4 0 3 6-3 1-3-6-3 3z" fill="#000"/></g>
</svg>

<!-- map -->
<svg style="left:1277px;top:488px" width="163" height="265" viewBox="1277 488 163 265">
<rect x="1277" y="488" width="163" height="265" fill="#000"/>
<rect x="1278" y="528" width="160" height="182" fill="#f00" stroke="#a06020"/>
<path d="M1286 537V701M1358 537V701M1430 537V701" stroke="#a8a8a8" stroke-width="2.500" fill="none"/>
<path d="M1286 537H1430M1297 537V701M1419 537V701M1286 701H1430M1297 619H1419" stroke="#40e0e0" stroke-width="2" fill="none"/>
<path d="M1294 616l6 6M1300 616l-6 6M1355 616l6 6M1361 616l-6 6M1283 698l6 6M1289 698l-6 6M1294 698l6 6M1300 698l-6 6M1355 698l6 6M1361 698l-6 6" stroke="#d8f0f0" stroke-width=".8"/>
</svg>
<div style="left:1277px;top:489px;width:2px;height:264px;background:#2c5c54"></div>
<div style="left:1277px;top:750px;width:163px;height:47px;background:#52c8a8;border-top:3px solid #a0e8d8;border-left:1px solid #3a7a70"></div>
<div class="m" style="left:1281px;top:760px;font-size:14px;line-height:15px">X</div><div class="m" style="left:1300px;top:760px;font-size:14px;line-height:15px">=</div>
<div class="m" style="left:1318px;top:760px;font-size:14px;line-height:15px">-31.502585</div>
<div class="m" style="left:1402px;top:759px;font-size:13px;line-height:15px;transform:scaleX(1.500);transform-origin:left">mm</div>
<div class="m" style="left:1281px;top:775px;font-size:14px;line-height:15px">Y</div><div class="m" style="left:1300px;top:775px;font-size:14px;line-height:15px">=</div>
<div class="m" style="left:1318px;top:775px;font-size:14px;line-height:15px">68.062825</div>
<div class="m" style="left:1394px;top:774px;font-size:13px;line-height:15px;transform:scaleX(1.500);transform-origin:left">mm</div>

<!-- bottom bar -->
<div style="left:0;top:797px;width:1440px;height:71px;background:#ffffcc"></div>
<svg style="left:0;top:797px" width="350" height="34">
<rect x="1" y="1" width="32" height="31" fill="#ffffcc" stroke="#111"/><rect x="6" y="5" width="23" height="23" fill="none" stroke="#111"/><rect x="7" y="6" width="21" height="21" fill="#ffffcc" stroke="#888"/><path d="M11 10l13 13M11 10h4M11 10v4M24 23h-4M24 23v-4" stroke="#111" fill="none"/>
<rect x="33" y="1" width="32" height="31" fill="#ffffcc" stroke="#111"/><rect x="38" y="5" width="23" height="23" fill="none" stroke="#111"/><path d="M42 24L54 10M42 24h14M46 13v5M51 20a3 3 0 0 1 4 0" stroke="#111" fill="none"/>
<rect x="65" y="1" width="29" height="31" fill="#5a9a90"/><rect x="68" y="4" width="24" height="24" fill="#ffffcc"/><rect x="72" y="8" width="16" height="17" fill="none" stroke="#111"/><path d="M72 17h16M80 8v17" stroke="#111"/>
<rect x="144.500" y="2.500" width="171" height="28" fill="#ffffcc" stroke="#555"/><rect x="146" y="4" width="168" height="25" fill="#ffffcc" stroke="#b0b088" stroke-width="2"/><path d="M152 8v14" stroke="#111" stroke-dasharray="1 1"/>
<rect x="318" y="1" width="29" height="31" fill="#5a9a90"/><rect x="321" y="4" width="24" height="25" fill="#ffffcc"/><rect x="325" y="8" width="16" height="17" fill="none" stroke="#111"/><path d="M333 10v10M333 22v2" stroke="#111" stroke-width="1.500"/>
<path d="M348 0v33M351 0v33" stroke="#333"/>
</svg>
<div class="m" style="left:98px;top:806px;font-size:12.500px;line-height:15px;letter-spacing:.2px">X Y :</div>
<div class="m" style="left:352px;top:806px;font-size:11.700px;line-height:15px">&lt;M1&gt; - Select first area corner</div>
<div style="left:1361px;top:798px;width:79px;height:32px;background:#52c8a8;border:1px solid #333;border-left:2px solid #111"></div>
<div style="left:1364px;top:800px;width:72px;height:27px;border:1px solid;border-color:#a0e8d8 #3a7a70 #3a7a70 #a0e8d8"></div>
<div class="m" style="left:1373px;top:806px;font-size:12.500px;line-height:15px">MM</div>
<div style="left:1417px;top:810px;width:12px;height:6px;background:#9cd9d9;border:1px solid;border-color:#cdf2f2 #2a5a50 #2a5a50 #cdf2f2"></div>
<div style="left:0;top:829px;width:1440px;height:2px;background:#111"></div>
<div style="left:0;top:831px;width:1440px;height:2px;background:#6a9a98"></div>
<div class="m" style="left:1px;top:833px;width:1437px;height:26px;background:#b0ffff;border:1px solid #111;box-shadow:inset 2px 2px 0 #d8ffff,inset -2px -2px 0 #6a9a98;font-size:11.700px;line-height:24px;text-align:center;padding-left:2px">DX=13.9620875,DY=-10.2696325,D=17.3322</div>
<div style="left:0;top:859px;width:1440px;height:9px;background:#ffffe0"></div>
<div style="left:14px;top:864px;width:26px;height:26px;border-radius:50%;background:#fff;border:1px solid #6a8ab0"></div>
</div></body></html>
